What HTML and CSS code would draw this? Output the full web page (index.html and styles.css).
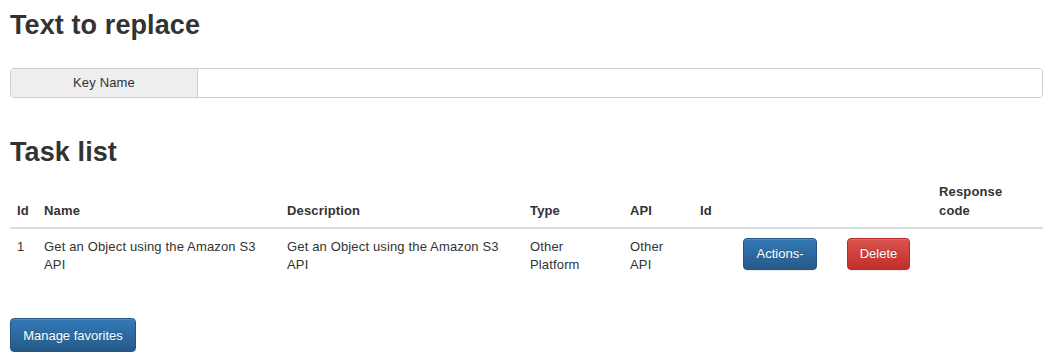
FILE: index.html
```html
<!DOCTYPE html>
<html lang="en">
<head>
  <meta charset="UTF-8">
  <title>Task list</title>
  <link rel="stylesheet" href="styles.css">
</head>
<body>
  <div class="container">
    <h2 class="titulo">Text to replace</h2>

    <div class="input-group">
      <span class="addon">Key Name</span>
      <input type="text" class="campo">
    </div>

    <h2 class="titulo titulo-tasks">Task list</h2>

    <table class="tabela">
      <colgroup>
        <col style="width: 27px">
        <col style="width: 243px">
        <col style="width: 243px">
        <col style="width: 100px">
        <col style="width: 70px">
        <col style="width: 43px">
        <col style="width: 104px">
        <col style="width: 92px">
        <col style="width: 111px">
      </colgroup>
      <thead>
        <tr>
          <th>Id</th>
          <th>Name</th>
          <th>Description</th>
          <th>Type</th>
          <th>API</th>
          <th>Id</th>
          <th></th>
          <th></th>
          <th class="col-resposta">Response code</th>
        </tr>
      </thead>
      <tbody>
        <tr>
          <td>1</td>
          <td>Get an Object using the Amazon S3 API</td>
          <td>Get an Object using the Amazon S3 API</td>
          <td class="col-tipo">Other Platform</td>
          <td>Other API</td>
          <td></td>
          <td><button class="btn btn-azul btn-actions">Actions-</button></td>
          <td><button class="btn btn-vermelho btn-delete">Delete</button></td>
          <td></td>
        </tr>
      </tbody>
    </table>

    <button class="btn btn-azul btn-manage">Manage favorites</button>
  </div>
</body>
</html>
```

FILE: styles.css
```css
* {
  box-sizing: border-box;
}

body {
  margin: 0;
  font-family: 'Liberation Sans', Arial, sans-serif;
  font-size: 13px;
  letter-spacing: 0.15px;
  color: #333;
  background: #fff;
}

.container {
  padding: 0 7px 0 10px;
}

.titulo {
  font-size: 27px;
  font-weight: bold;
  line-height: 1.1;
  letter-spacing: 0.1px;
  margin: 11px 0 27px;
}

.titulo-tasks {
  margin: 40px 0 8px;
}

.input-group {
  display: flex;
  height: 30px;
  border: 1px solid #ccc;
  border-radius: 4px;
  overflow: hidden;
}

.addon {
  width: 187px;
  flex: none;
  background: #eee;
  border-right: 1px solid #ccc;
  display: flex;
  align-items: center;
  justify-content: center;
}

.campo {
  flex: 1;
  border: none;
  outline: none;
  font: inherit;
  padding: 0 10px;
}

.tabela {
  width: 1033px;
  table-layout: fixed;
  border-collapse: collapse;
}

.tabela th,
.tabela td {
  padding: 7px;
  text-align: left;
}

.tabela th {
  vertical-align: bottom;
  line-height: 19px;
  border-bottom: 2px solid #ddd;
}

.tabela td {
  vertical-align: top;
  line-height: 18px;
  padding-top: 9px;
}

.tabela .col-resposta {
  padding-right: 30px;
}

.tabela .col-tipo {
  padding-right: 20px;
}

.btn {
  font: inherit;
  color: #fff;
  border-radius: 4px;
  cursor: pointer;
  vertical-align: top;
  text-shadow: 0 -1px 0 rgba(0,0,0,0.2);
  box-shadow: inset 0 1px 0 rgba(255,255,255,0.15), 0 1px 1px rgba(0,0,0,0.075);
}

.btn-azul {
  background: linear-gradient(to bottom, #337ab7 0%, #265a88 100%);
  border: 1px solid #245580;
}

.btn-vermelho {
  background: linear-gradient(to bottom, #d9534f 0%, #c12e2a 100%);
  border: 1px solid #b92c28;
}

.btn-actions {
  width: 74px;
  height: 32px;
  padding: 0;
}

.btn-delete {
  width: 63px;
  height: 32px;
  padding: 0;
}

.btn-manage {
  display: block;
  margin-top: 37px;
  width: 126px;
  height: 34px;
  padding: 0;
}
```
